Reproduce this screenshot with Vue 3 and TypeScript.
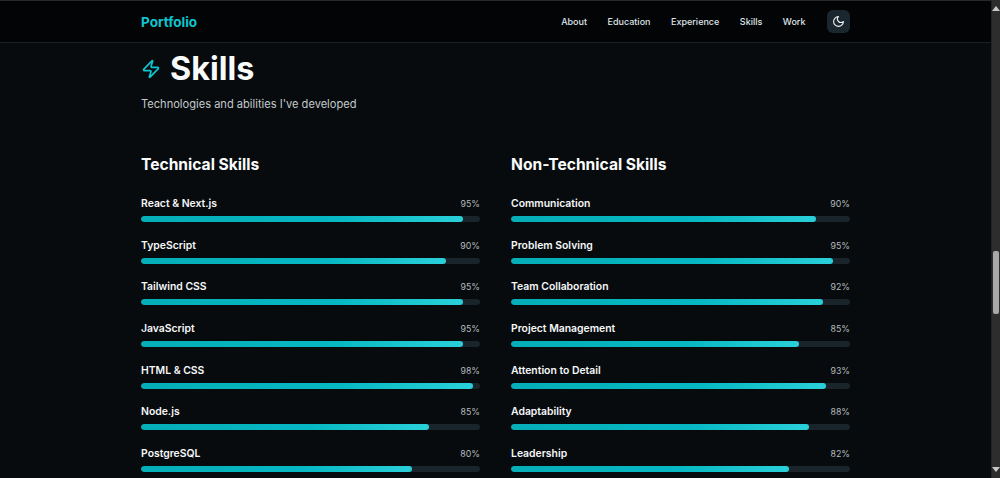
<script setup lang="ts">
interface Skill { name: string; value: number }
const links: string[] = ['About', 'Education', 'Experience', 'Skills', 'Work']
const groups: { title: string; skills: Skill[] }[] = [
  { title: 'Technical Skills', skills: [
    { name: 'React & Next.js', value: 95 },
    { name: 'TypeScript', value: 90 },
    { name: 'Tailwind CSS', value: 95 },
    { name: 'JavaScript', value: 95 },
    { name: 'HTML & CSS', value: 98 },
    { name: 'Node.js', value: 85 },
    { name: 'PostgreSQL', value: 80 },
  ] },
  { title: 'Non-Technical Skills', skills: [
    { name: 'Communication', value: 90 },
    { name: 'Problem Solving', value: 95 },
    { name: 'Team Collaboration', value: 92 },
    { name: 'Project Management', value: 85 },
    { name: 'Attention to Detail', value: 93 },
    { name: 'Adaptability', value: 88 },
    { name: 'Leadership', value: 82 },
  ] },
]
</script>

<template>
  <div class="window">
    <div class="page">
      <header class="nav">
        <div class="nav-inner">
          <span class="logo">Portfolio</span>
          <nav class="links">
            <a v-for="l in links" :key="l" class="link">{{ l }}</a>
            <button class="theme" aria-label="Toggle theme">
              <svg width="16" height="16" viewBox="0 0 24 24" fill="none" stroke="currentColor" stroke-width="2" stroke-linecap="round" stroke-linejoin="round"><path d="M12 3a6 6 0 0 0 9 9 9 9 0 1 1-9-9Z" /></svg>
            </button>
          </nav>
        </div>
      </header>
      <main class="main">
        <div class="title-row">
          <svg class="bolt" width="20" height="20" viewBox="0 0 24 24" fill="none" stroke="currentColor" stroke-width="2" stroke-linecap="round" stroke-linejoin="round"><path d="M4 14a1 1 0 0 1-.78-1.63l9.9-10.2a.5.5 0 0 1 .86.46l-1.92 6.02A1 1 0 0 0 13 10h7a1 1 0 0 1 .78 1.63l-9.9 10.2a.5.5 0 0 1-.86-.46l1.92-6.02A1 1 0 0 0 11 14z" /></svg>
          <h1 class="title">Skills</h1>
        </div>
        <p class="sub">Technologies and abilities I've developed</p>
        <div class="cols">
          <section v-for="g in groups" :key="g.title" class="col">
            <h2 class="col-title">{{ g.title }}</h2>
            <div class="rows">
              <div v-for="s in g.skills" :key="s.name" class="row">
                <div class="row-head">
                  <span class="name">{{ s.name }}</span>
                  <span class="pct">{{ s.value }}%</span>
                </div>
                <div class="track"><div class="fill" :style="{ width: s.value + '%' }"></div></div>
              </div>
            </div>
          </section>
        </div>
      </main>
    </div>
    <aside class="scrollbar">
      <span class="arrow up"></span>
      <span class="thumb"></span>
      <span class="arrow down"></span>
    </aside>
  </div>
</template>

<style>
html, body { margin: 0; background: #070b0e; overflow: hidden; }
</style>

<style scoped>
.window { display: flex; width: 1000px; height: 478px; overflow: hidden; background: #070b0e; font-family: Inter, "Liberation Sans", sans-serif; color: #f5f7f8; }
.page { flex: 1; min-width: 0; height: 478px; overflow: hidden; border-top: 1px solid #26292b; box-sizing: border-box; }
.nav { height: 41px; background: #030406; border-bottom: 1px solid #1a2026; }
.nav-inner { width: 709px; height: 100%; margin-left: 141px; display: flex; align-items: center; justify-content: space-between; }
.logo { color: #0fc4ce; font-size: 13.5px; font-weight: 700; }
.links { display: flex; align-items: center; gap: 20.5px; }
.link { font-size: 9px; font-weight: 500; color: #dfe3e6; }
.theme { width: 23px; height: 23px; margin-left: 1px; padding: 0; border: 0; border-radius: 6px; background: #1b272f; color: #f2f4f5; display: flex; align-items: center; justify-content: center; }
.theme svg { width: 13px; height: 13px; }
.main { width: 709px; margin-left: 141px; }
.title-row { display: flex; align-items: center; gap: 9px; margin-top: 8px; height: 36px; }
.bolt { color: #0fc4ce; }
.title { margin: 0; font-size: 32.3px; line-height: 36px; font-weight: 700; color: #fafbfb; }
.sub { margin: 8px 0 0; font-size: 11.1px; line-height: 18px; color: #c4c9cc; }
.cols { display: flex; gap: 31px; margin-top: 41px; }
.col { flex: 1; min-width: 0; }
.col-title { margin: 0; font-size: 15.6px; line-height: 22px; font-weight: 700; color: #fafbfb; }
.rows { display: flex; flex-direction: column; gap: 7.7px; margin-top: 17.4px; }
.row { display: flex; flex-direction: column; height: 34px; }
.row-head { display: flex; justify-content: space-between; align-items: center; height: 20px; margin-bottom: 2.6px; }
.name { font-size: 10.4px; font-weight: 600; color: #f5f7f8; }
.pct { font-size: 8.8px; color: #b4babd; }
.track { height: 6px; border-radius: 3px; background: #1a242b; overflow: hidden; }
.fill { height: 100%; border-radius: 3px; background: linear-gradient(90deg, #05aeb8, #06b8c2 60%, #2ad0d9); }
.scrollbar { width: 9px; flex: none; background: #2d2d2d; display: flex; flex-direction: column; align-items: center; box-sizing: border-box; border-left: 1px solid #222; position: relative; }
.arrow { width: 0; height: 0; border-left: 4px solid transparent; border-right: 4px solid transparent; }
.up { border-bottom: 5px solid #c8c8c8; margin-top: 6px; }
.down { border-top: 5px solid #c8c8c8; margin-top: auto; margin-bottom: 6px; }
.thumb { width: 6px; height: 63px; margin-top: 240px; border-radius: 2px; background: #a8a8a8; }
</style>
